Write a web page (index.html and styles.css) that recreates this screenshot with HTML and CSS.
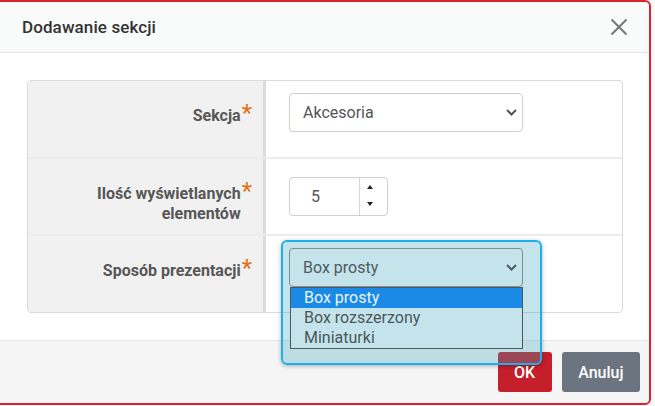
FILE: index.html
```html
<!DOCTYPE html>
<html lang="pl">
<head>
<meta charset="utf-8">
<title>Dodawanie sekcji</title>
<link rel="stylesheet" href="styles.css">
</head>
<body>
<div class="modal">
  <div class="modal-header">
    <h2 class="modal-title">Dodawanie sekcji</h2>
    <button class="close" type="button" aria-label="Zamknij">
      <svg width="18" height="18" viewBox="0 0 18 18"><path d="M1.5 1.5 L16.5 16.5 M16.5 1.5 L1.5 16.5" stroke="#777" stroke-width="2" fill="none"/></svg>
    </button>
  </div>
  <div class="modal-body">
    <div class="form-table">
      <div class="row row-first">
        <div class="label-cell">
          <span class="label-text">Sekcja</span><span class="req">*</span>
        </div>
        <div class="field-cell">
          <div class="select">
            <span>Akcesoria</span>
            <svg class="chev" width="11" height="7" viewBox="0 0 11 7"><path d="M1 1 L5.5 5.5 L10 1" stroke="#555" stroke-width="2" fill="none"/></svg>
          </div>
        </div>
      </div>
      <div class="row">
        <div class="label-cell">
          <span class="label-text">Ilość wyświetlanych elementów</span><span class="req">*</span>
        </div>
        <div class="field-cell field-cell-mid">
          <div class="number">
            <span class="num-value">5</span>
            <span class="spinner"><i class="tri-up"></i><i class="tri-down"></i></span>
          </div>
        </div>
      </div>
      <div class="row row-last">
        <div class="label-cell">
          <span class="label-text">Sposób prezentacji</span><span class="req">*</span>
        </div>
        <div class="field-cell">
          <div class="combo">
            <div class="select select-open">
              <span>Box prosty</span>
              <svg class="chev" width="11" height="7" viewBox="0 0 11 7"><path d="M1 1 L5.5 5.5 L10 1" stroke="#4f5c61" stroke-width="2" fill="none"/></svg>
            </div>
            <ul class="options">
              <li class="opt opt-active">Box prosty</li>
              <li class="opt">Box rozszerzony</li>
              <li class="opt">Miniaturki</li>
            </ul>
          </div>
        </div>
      </div>
    </div>
  </div>
  <div class="modal-footer">
    <button class="btn btn-ok" type="button">OK</button>
    <button class="btn btn-cancel" type="button">Anuluj</button>
  </div>
</div>
</body>
</html>
```
FILE: styles.css
```css
* { box-sizing: border-box; }

html, body {
  margin: 0;
  padding: 0;
}

body {
  background: #f9f9f9;
  font-family: Roboto, "Liberation Sans", Arial, sans-serif;
  overflow: hidden;
}

.modal {
  margin-left: -2px;
  width: 653px;
  height: 405px;
  border: 2px solid #d9232e;
  border-radius: 0 6px 6px 0;
  background: #fff;
  display: flex;
  flex-direction: column;
}

.modal-header {
  height: 51px;
  flex: none;
  display: flex;
  align-items: center;
  justify-content: space-between;
  padding: 0 21px 0 22px;
  background: #f9fafa;
  border-bottom: 1px solid #e3e4e4;
  border-radius: 0 5px 0 0;
}

.modal-title {
  margin: 0;
  font-size: 17px;
  font-weight: 500;
  color: #333;
  letter-spacing: 0.1px;
}

.close {
  border: 0;
  background: none;
  padding: 0;
  width: 18px;
  height: 18px;
  display: flex;
}

.modal-body {
  flex: none;
  height: 287px;
  padding: 27px 26px 27px 27px;
}

.form-table {
  border: 1px solid #dadada;
  border-radius: 4px;
}

.row {
  display: flex;
  height: 78px;
  border-bottom: 2px solid #ececec;
}

.row-first { height: 78px; }
.row:nth-child(2) { height: 77px; }
.row-last { height: 76px; border-bottom: 0; }

.label-cell {
  width: 238px;
  flex: none;
  background: #f1f1f1;
  border-right: 3px solid #dcdcdc;
  display: flex;
  justify-content: flex-end;
  align-items: baseline;
  padding: 22px 11px 0 20px;
}

.row-first .label-cell { border-top-left-radius: 3px; }
.row-last .label-cell { border-bottom-left-radius: 3px; }

.label-text {
  font-size: 16px;
  font-weight: 700;
  line-height: 20px;
  color: #575757;
  text-align: right;
}

.req {
  font-size: 24px;
  line-height: 20px;
  color: #e07010;
  margin-left: 1px;
  font-weight: 400;
}

.field-cell {
  flex: 1;
  padding: 12px 0 0 23px;
}

.field-cell-mid { padding-top: 18px; }

.select {
  width: 234px;
  height: 39px;
  border: 1px solid #cfcfcf;
  border-radius: 4px;
  display: flex;
  align-items: center;
  justify-content: space-between;
  padding: 0 5px 0 13px;
  font-size: 16px;
  color: #555;
  background: #fff;
}

.chev { display: block; }

.number {
  width: 99px;
  height: 39px;
  border: 1px solid #cfcfcf;
  border-radius: 4px;
  display: flex;
  font-size: 16px;
  color: #555;
}

.num-value {
  width: 69px;
  padding-left: 21px;
  display: flex;
  align-items: center;
}

.spinner {
  flex: 1;
  border-left: 1px solid #d6d6d6;
  display: flex;
  flex-direction: column;
  align-items: flex-start;
  padding: 7px 0 0 7px;
  gap: 13px;
}

.tri-up, .tri-down {
  display: block;
  width: 0;
  height: 0;
  border-left: 3px solid transparent;
  border-right: 3px solid transparent;
}

.tri-up { border-bottom: 4px solid #222; }
.tri-down { border-top: 4px solid #222; }

.combo {
  position: relative;
  z-index: 1;
  width: 234px;
}

.combo::before {
  content: "";
  position: absolute;
  z-index: -1;
  top: -8px;
  left: -8px;
  width: 257px;
  height: 121px;
  border: 2px solid #1db1ea;
  border-radius: 6px;
  background: rgba(62, 162, 185, 0.3);
  box-shadow: 0 1px 4px rgba(0, 0, 0, 0.3);
}

.select-open {
  background: transparent;
  border-color: #7f8e93;
  color: #4f5c61;
}

.options {
  position: absolute;
  top: 39px;
  left: 1px;
  width: 233px;
  margin: 0;
  padding: 0;
  list-style: none;
  border: 1px solid #4f575b;
  background: #c5e3ea;
}

.opt {
  height: 20px;
  line-height: 20px;
  padding-left: 13px;
  font-size: 16px;
  color: #4a585d;
}

.opt-active {
  background: #1a8ae6;
  color: #e8f5fb;
}

.modal-footer {
  flex: 1;
  display: flex;
  justify-content: flex-end;
  align-items: flex-start;
  gap: 10px;
  padding: 11px 9px 0 0;
  background: #f5f5f5;
  border-top: 1px solid #e4e4e4;
  border-radius: 0 0 5px 0;
}

.btn {
  height: 40px;
  border: 0;
  border-radius: 3px;
  padding: 0 16.5px;
  font-family: Roboto, "Liberation Sans", Arial, sans-serif;
  font-size: 16px;
  font-weight: 500;
  color: #fff;
}

.btn-ok { background: #c41f2b; }
.btn-cancel { background: #6c7480; }
```
